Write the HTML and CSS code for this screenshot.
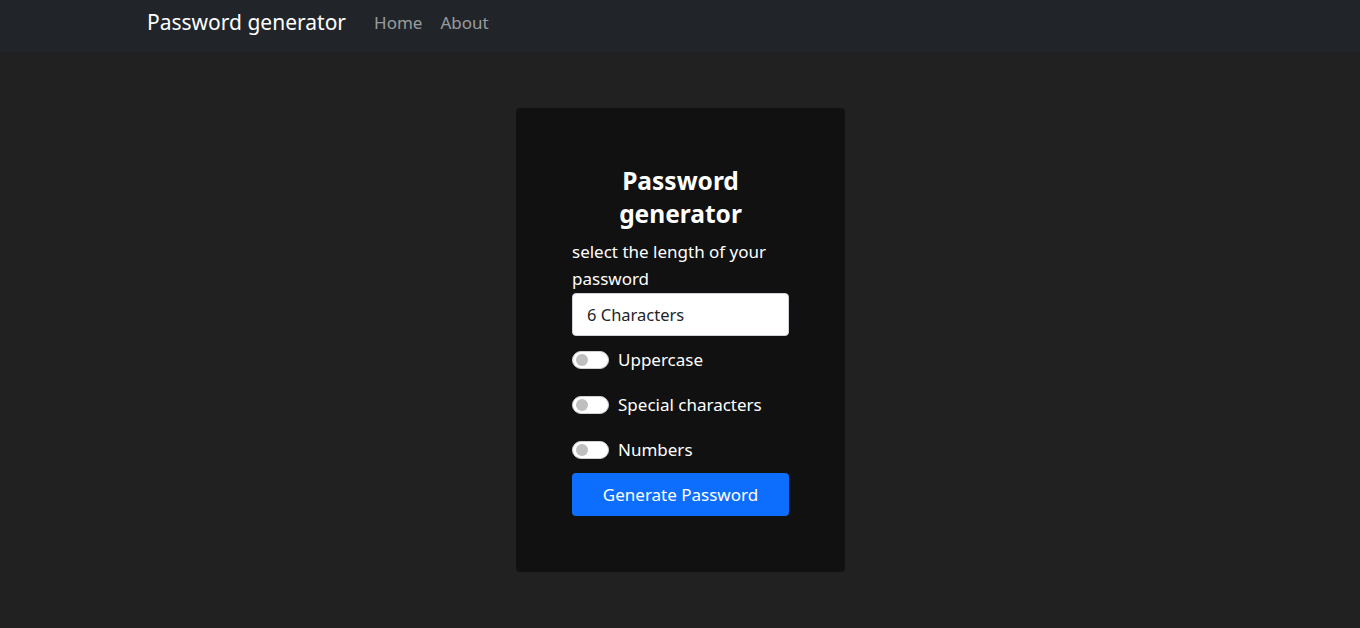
FILE: index.html
```html
<!DOCTYPE html>
<html>
<head>
<meta charset="utf-8">
<link rel="stylesheet" href="styles.css">
</head>
<body>
<nav class="navbar">
  <a class="brand" href="#">Password generator</a>
  <ul class="nav">
    <li><a href="#">Home</a></li>
    <li><a href="#">About</a></li>
  </ul>
</nav>
<main class="main">
  <div class="card">
    <div class="card-body">
      <h1 class="title">Password generator</h1>
      <label class="label">select the length of your password</label>
      <div class="select">6 Characters</div>
      <div class="switch-row"><span class="switch"><span class="knob"></span></span><span class="switch-label">Uppercase</span></div>
      <div class="switch-row"><span class="switch"><span class="knob"></span></span><span class="switch-label">Special characters</span></div>
      <div class="switch-row"><span class="switch"><span class="knob"></span></span><span class="switch-label">Numbers</span></div>
      <button class="btn">Generate Password</button>
    </div>
  </div>
</main>
</body>
</html>
```
FILE: styles.css
```css
* { box-sizing: border-box; }
html, body { margin: 0; padding: 0; }
body {
  background: #212121;
  font-family: "Noto Sans", "Open Sans", sans-serif;
  color: #fff;
  height: 628px;
  overflow: hidden;
}
.navbar {
  height: 52px;
  background: #212529;
  display: flex;
  align-items: center;
  padding-left: 147px;
  padding-bottom: 8px;
}
.brand {
  color: #fff;
  text-decoration: none;
  font-size: 21px;
  margin-right: 28px;
}
.nav {
  list-style: none;
  margin: 0;
  padding: 0;
  display: flex;
  gap: 18px;
}
.nav a {
  color: rgba(255,255,255,.55);
  text-decoration: none;
  font-size: 17px;
}
.main {
  display: flex;
  justify-content: center;
  padding-top: 56px;
}
.card {
  width: 329px;
  height: 464px;
  background: #111111;
  border-radius: 4px;
  margin-left: 1px;
}
.card-body {
  padding: 56px 56px;
  display: flex;
  flex-direction: column;
}
.title {
  margin: 0;
  text-align: center;
  font-size: 24.5px;
  font-weight: 700;
  line-height: 33px;
  padding: 0 40px;
}
.label {
  font-size: 17px;
  line-height: 27px;
  margin-top: 8px;
}
.select {
  margin-top: 1px;
  height: 43px;
  background: #fff;
  border: 1px solid #ced4da;
  border-radius: 4px;
  color: #212529;
  font-size: 16.5px;
  display: flex;
  align-items: center;
  padding-left: 14px;
}
.switch-row {
  display: flex;
  align-items: center;
  height: 27px;
  margin-top: 10px;
  margin-bottom: 8px;
}
.switch {
  width: 37px;
  height: 18px;
  border-radius: 9px;
  background: #fff;
  border: 1px solid #d0d0d0;
  display: flex;
  align-items: center;
  padding-left: 3px;
  margin-right: 9px;
}
.knob {
  width: 12px;
  height: 12px;
  border-radius: 50%;
  background: #bfbfbf;
}
.switch-label {
  font-size: 17px;
}
.btn {
  margin-top: 2px;
  height: 43px;
  background: #0d6efd;
  color: #fff;
  border: 0;
  border-radius: 4px;
  font-family: inherit;
  font-size: 17px;
}
```
